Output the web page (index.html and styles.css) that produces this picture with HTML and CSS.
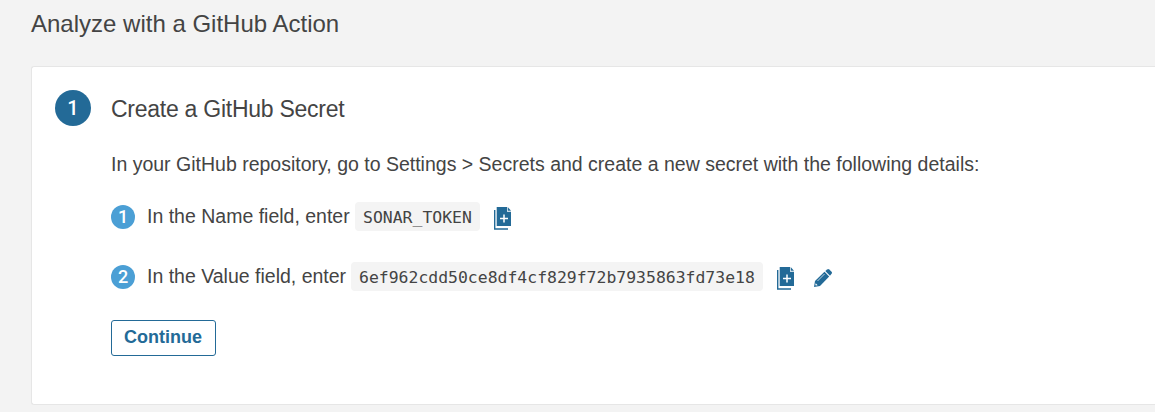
FILE: index.html
```html
<!DOCTYPE html>
<html lang="en">
<head>
<meta charset="utf-8">
<title>Analyze with a GitHub Action</title>
<link rel="stylesheet" href="styles.css">
</head>
<body>
<h1 class="page-title">Analyze with a GitHub Action</h1>
<main class="card">
  <div class="step-number">1</div>
  <section class="content">
    <h2 class="title">Create a GitHub Secret</h2>
    <p class="intro">In your GitHub repository, go to Settings &gt; Secrets and create a new secret with the following details:</p>
    <ol class="steps">
      <li class="step"><span class="bullet">1</span><span class="label label-name">In the Name field, enter</span><code class="code">SONAR_TOKEN</code>
        <svg class="copy" viewBox="0 0 18 23"><path fill="#236a97" d="M2.700 0h10.300v4.800h4V19H2.700z"/><path fill="#236a97" d="M13.700 0l3.300 3.800h-3.300z"/><path fill="none" stroke="#236a97" stroke-width="1.4" d="M.7 3v19H14"/><path stroke="#fff" stroke-width="1.5" d="M6 11.5h8M10 7.5v8"/></svg></li>
      <li class="step"><span class="bullet">2</span><span class="label label-value">In the Value field, enter</span><code class="code">6ef962cdd50ce8df4cf829f72b7935863fd73e18</code>
        <svg class="copy" viewBox="0 0 18 23"><path fill="#236a97" d="M2.700 0h10.300v4.800h4V19H2.700z"/><path fill="#236a97" d="M13.700 0l3.300 3.800h-3.300z"/><path fill="none" stroke="#236a97" stroke-width="1.4" d="M.7 3v19H14"/><path stroke="#fff" stroke-width="1.500" d="M6 11.500h8M10 7.500v8"/></svg>
        <svg class="edit" viewBox="0 0 18 18"><path fill="#236a97" d="M0 18l1-6L10.500 2.800l4.700 4.700L6 16.900z"/><path fill="#236a97" d="M11.300 2l1.900-1.600q1-.8 2 0l2.400 2.400q.8 1 0 2L16 6.700z"/><path stroke="#fff" stroke-width=".7" d="M3.500 12l7-7"/><path fill="#fff" d="M1.700 14.200l2 2-1.800.4-.6-.6z"/></svg></li>
    </ol>
    <button class="continue">Continue</button>
  </section>
</main>
</body>
</html>
```
FILE: styles.css
```css
* { box-sizing: border-box; }
body { margin: 0; height: 412px; overflow: hidden; background: #f3f3f3; color: #444; font-family: "Liberation Sans", Arial, sans-serif; }
.page-title { margin: 0 0 0 31px; height: 66px; padding-top: 9px; font-size: 24px; line-height: 30px; font-weight: 400; }
.card { display: flex; margin-left: 31px; height: 339px; padding: 23px 0 0 23px; background: #fff; border: 1px solid #e6e6e6; border-right: 0; border-radius: 3px 0 0 3px; }
.step-number { width: 36px; height: 36px; border-radius: 50%; background: #236a97; color: #fff; font-family: Roboto, sans-serif; font-weight: 500; font-size: 20px; line-height: 36px; text-align: center; }
.content { margin-left: 20px; }
.title { margin: 4px 0 0; font-size: 23px; letter-spacing: -.26px; line-height: 30px; font-weight: 400; }
.intro { margin: 25px 0 0; font-size: 19.5px; line-height: 30px; white-space: nowrap; }
.steps { margin: 23px 0 0; padding: 0; list-style: none; }
.step { display: flex; align-items: flex-start; height: 60px; font-size: 19.5px; }
.bullet { width: 24px; height: 24px; margin: 3px 12px 0 0; border-radius: 50%; background: #4b9fd5; color: #fff; font-family: Roboto, sans-serif; font-weight: 500; font-size: 18px; line-height: 24px; text-align: center; }
.label { line-height: 28px; white-space: nowrap; }
.label-name { width: 208px; }
.label-value { width: 204px; }
.code { height: 29px; padding: 0 8px; border-radius: 4px; background: #f4f4f4; font-family: "DejaVu Sans Mono", monospace; font-size: 16.45px; line-height: 31px; }
.copy { width: 18px; height: 23px; margin: 5px 0 0 14px; }
.edit { width: 18px; height: 18px; margin: 7px 0 0 19px; }
.continue { display: block; width: 105px; height: 36px; margin: -2px 0 0; padding: 0 1px 2px 0; border: 1px solid #236a97; border-radius: 3px; background: #fff; color: #236a97; font: 700 18px "Liberation Sans", Arial, sans-serif; }
```
